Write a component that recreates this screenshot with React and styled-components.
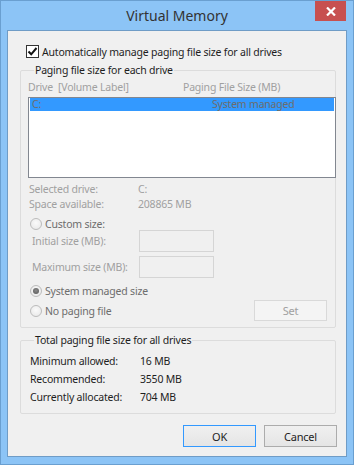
import React from "react";
import styled, { createGlobalStyle } from "styled-components";

const GlobalStyle = createGlobalStyle`
  html, body {
    margin: 0;
    padding: 0;
    background: #ffffff;
  }
  * {
    box-sizing: border-box;
  }
`;

const Window = styled.div`
  width: 354px;
  height: 465px;
  display: flex;
  flex-direction: column;
  background: #8cc4f6;
  border: 1px solid #6a9fd0;
  font-family: "Noto Sans", "Open Sans", sans-serif;
  font-size: 10.5px;
  letter-spacing: -0.2px;
  color: #1e1e1e;
  white-space: nowrap;
`;

const TitleBar = styled.div`
  height: 29px;
  flex: none;
  display: grid;
  grid-template-columns: 38px 1fr 38px;
  align-items: start;
`;

const Title = styled.div`
  grid-column: 2;
  height: 29px;
  line-height: 29px;
  text-align: center;
  font-size: 14px;
  letter-spacing: 0;
  color: #333333;
`;

const CloseButton = styled.div`
  grid-column: 3;
  width: 31px;
  height: 20px;
  background: #c75050;
  display: flex;
  align-items: center;
  justify-content: center;
`;

const Client = styled.div`
  flex: 1;
  margin: 0 6px 7px 6px;
  border: 1px solid #6f9cc6;
  background: #f0f0f0;
  padding: 14px 10px 0 12px;
  display: flex;
  flex-direction: column;
`;

const CheckRow = styled.label`
  display: flex;
  align-items: center;
  gap: 3px;
  height: 13px;
  margin-left: 6px;
  color: #1e1e1e;
`;

const CheckBox = styled.span`
  width: 13px;
  height: 13px;
  border: 1px solid #333333;
  background: #ffffff;
  display: flex;
  align-items: center;
  justify-content: center;
`;

const Group = styled.fieldset`
  margin: ${(p) => p.$top}px 0 0 0;
  padding: 0 0 ${(p) => p.$bottom}px 7px;
  border: 1px solid #dcdcdc;
  border-radius: 2px;
  min-width: 0;
`;

const Legend = styled.legend`
  margin-left: 6px;
  padding: 0 1px;
  line-height: 15px;
  color: #1e1e1e;
`;

const ColumnHeader = styled.div`
  display: grid;
  grid-template-columns: 155px 1fr;
  margin-top: 2px;
  line-height: 15px;
  color: #a0a0a0;
`;

const ListBox = styled.div`
  margin: 2px -1px 0 0;
  height: 81px;
  border: 1px solid #828790;
  background: #ffffff;
  padding: 0 1px;
`;

const ListRow = styled.div`
  height: 13px;
  line-height: 13px;
  background: #3399ff;
  color: #6d6d6d;
  display: grid;
  grid-template-columns: 180px 1fr;
  padding-left: 2px;
`;

const InfoGrid = styled.div`
  display: grid;
  grid-template-columns: ${(p) => p.$label}px 1fr;
  grid-auto-rows: ${(p) => p.$row}px;
  align-items: center;
  margin: ${(p) => p.$top}px 0 0 ${(p) => p.$left}px;
  color: ${(p) => p.$color};
`;

const RadioRow = styled.div`
  display: flex;
  align-items: center;
  gap: 3px;
  height: ${(p) => p.$height}px;
  margin: ${(p) => p.$top}px 8px 0 2px;
  color: #6d6d6d;
`;

const Radio = styled.span`
  width: 12px;
  height: 12px;
  flex: none;
  border-radius: 50%;
  border: 1px solid #bcbcbc;
  background: radial-gradient(circle at 50% 40%, #fafafa, #e6e6e6);
  display: flex;
  align-items: center;
  justify-content: center;

  &::after {
    content: "";
    display: ${(p) => (p.$checked ? "block" : "none")};
    width: 6px;
    height: 6px;
    border-radius: 50%;
    background: radial-gradient(circle at 50% 40%, #8a8a8a, #555555);
  }
`;

const SizeRow = styled.div`
  display: grid;
  grid-template-columns: 107px 75px;
  align-items: center;
  height: 22px;
  margin: ${(p) => p.$top}px 0 0 4px;
  color: #a0a0a0;
`;

const SizeInput = styled.div`
  height: 22px;
  border: 1px solid #d5d5d5;
  background: #f0f0f0;
`;

const Spacer = styled.div`
  flex: 1;
`;

const Button = styled.div`
  width: 73px;
  height: ${(p) => (p.$small ? 21 : 22)}px;
  display: flex;
  align-items: center;
  justify-content: center;
  font-size: 11px;
  border: 1px solid ${(p) => p.$border || "#acacac"};
  background: ${(p) =>
    p.$disabled ? "#f4f4f4" : "linear-gradient(#f0f0f0, #e5e5e5)"};
  color: ${(p) => (p.$disabled ? "#a0a0a0" : "#1e1e1e")};
`;

const ButtonRow = styled.div`
  display: flex;
  justify-content: flex-end;
  gap: 8px;
  margin: 11px -1px 0 0;
`;

export default function App() {
  return (
    <>
      <GlobalStyle />
      <Window>
        <TitleBar>
          <Title>Virtual Memory</Title>
          <CloseButton>
            <svg width="10" height="9" viewBox="0 0 10 9">
              <path
                d="M1 0.5 L9 8.5 M9 0.5 L1 8.5"
                stroke="#ffffff"
                strokeWidth="2.2"
              />
            </svg>
          </CloseButton>
        </TitleBar>
        <Client>
          <CheckRow>
            <CheckBox>
              <svg width="11" height="11" viewBox="0 0 11 11">
                <path
                  d="M1.5 5.5 L4.2 8.3 L9.5 2"
                  fill="none"
                  stroke="#111111"
                  strokeWidth="2"
                />
              </svg>
            </CheckBox>
            Automatically manage paging file size for all drives
          </CheckRow>

          <Group $top={5} $bottom={6}>
            <Legend>Paging file size for each drive</Legend>
            <ColumnHeader>
              <span>Drive&nbsp; [Volume Label]</span>
              <span>Paging File Size (MB)</span>
            </ColumnHeader>
            <ListBox>
              <ListRow>
                <span>C:</span>
                <span>System managed</span>
              </ListRow>
            </ListBox>
            <InfoGrid $label={109} $row={15} $top={3} $left={1} $color="#a0a0a0">
              <span>Selected drive:</span>
              <span>C:</span>
              <span>Space available:</span>
              <span>208865 MB</span>
            </InfoGrid>
            <RadioRow $height={13} $top={6}>
              <Radio />
              Custom size:
            </RadioRow>
            <SizeRow $top={0}>
              <span>Initial size (MB):</span>
              <SizeInput />
            </SizeRow>
            <SizeRow $top={4}>
              <span>Maximum size (MB):</span>
              <SizeInput />
            </SizeRow>
            <RadioRow $height={13} $top={6}>
              <Radio $checked />
              System managed size
            </RadioRow>
            <RadioRow $height={21} $top={3}>
              <Radio />
              No paging file
              <Spacer />
              <Button $small $disabled $border="#d9d9d9">
                Set
              </Button>
            </RadioRow>
          </Group>

          <Group $top={5} $bottom={7}>
            <Legend>Total paging file size for all drives</Legend>
            <InfoGrid $label={110} $row={18} $top={4} $left={2} $color="#1e1e1e">
              <span>Minimum allowed:</span>
              <span>16 MB</span>
              <span>Recommended:</span>
              <span>3550 MB</span>
              <span>Currently allocated:</span>
              <span>704 MB</span>
            </InfoGrid>
          </Group>

          <ButtonRow>
            <Button $border="#3399ff">OK</Button>
            <Button>Cancel</Button>
          </ButtonRow>
        </Client>
      </Window>
    </>
  );
}
